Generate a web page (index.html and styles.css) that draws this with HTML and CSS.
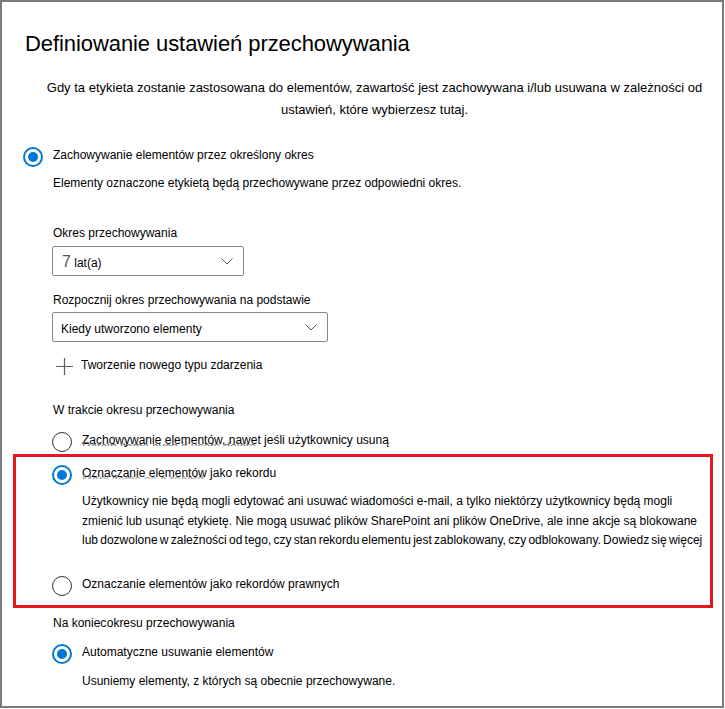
FILE: index.html
```html
<!DOCTYPE html>
<html lang="pl">
<head>
<meta charset="utf-8">
<title>Definiowanie ustawień przechowywania</title>
<link rel="stylesheet" href="styles.css">
</head>
<body>
<div class="frame">
  <h1 class="title">Definiowanie ustawień przechowywania</h1>
  <p class="intro">Gdy ta etykieta zostanie zastosowana do elementów, zawartość jest zachowywana i/lub usuwana w zależności od<br>ustawień, które wybierzesz tutaj.</p>

  <div class="radio-row top-row">
    <span class="radio checked"></span>
    <span class="label">Zachowywanie elementów przez określony okres</span>
  </div>

  <div class="sub">
    <p class="help">Elementy oznaczone etykietą będą przechowywane przez odpowiedni okres.</p>

    <div class="field-label f1">Okres przechowywania</div>
    <div class="dropdown dd1">
      <span class="value"><span class="num">7</span> lat(a)</span>
      <svg class="chev" width="12" height="7" viewBox="0 0 12 7"><polyline points="0.5,0.5 6,6 11.5,0.5" fill="none" stroke="#605e5c" stroke-width="1"/></svg>
    </div>

    <div class="field-label f2">Rozpocznij okres przechowywania na podstawie</div>
    <div class="dropdown dd2">
      <span class="value">Kiedy utworzono elementy</span>
      <svg class="chev" width="12" height="7" viewBox="0 0 12 7"><polyline points="0.5,0.5 6,6 11.5,0.5" fill="none" stroke="#605e5c" stroke-width="1"/></svg>
    </div>

    <div class="add-row">
      <svg class="plus" width="17" height="17" viewBox="0 0 17 17"><path d="M8.5 0V17M0 8.5H17" stroke="#605e5c" stroke-width="1.2" fill="none"/></svg>
      <span>Tworzenie nowego typu zdarzenia</span>
    </div>

    <div class="section-label s1">W trakcie okresu przechowywania</div>

    <div class="radio-row r-keep">
      <span class="radio"></span>
      <span class="label">Zachowywanie elementów, nawet jeśli użytkownicy usuną<span class="ghost g1">Retain items even if users delete</span></span>
    </div>

    <div class="highlight">
      <div class="radio-row">
        <span class="radio checked"></span>
        <span class="label">Oznaczanie elementów jako rekordu<span class="ghost g2">Mark items as a record</span></span>
      </div>
      <p class="record-desc">Użytkownicy nie będą mogli edytować ani usuwać wiadomości e-mail, a tylko niektórzy użytkownicy będą mogli<br>zmienić lub usunąć etykietę. Nie mogą usuwać plików SharePoint ani plików OneDrive, ale inne akcje są blokowane<br><span class="tight">lub dozwolone w zależności od tego, czy stan rekordu elementu jest zablokowany, czy odblokowany. Dowiedz się więcej</span></p>
      <div class="radio-row r-legal">
        <span class="radio"></span>
        <span class="label">Oznaczanie elementów jako rekordów prawnych</span>
      </div>
    </div>

    <div class="section-label s2">Na koniec <span class="join">okresu</span> przechowywania</div>

    <div class="radio-row r-auto">
      <span class="radio checked"></span>
      <span class="label">Automatyczne usuwanie elementów</span>
    </div>
    <p class="auto-desc">Usuniemy elementy, z których są obecnie przechowywane.</p>
  </div>
</div>
</body>
</html>
```

FILE: styles.css
```css
html, body {
  margin: 0;
  padding: 0;
  background: #ffffff;
}

body {
  font-family: "Liberation Sans", Arial, sans-serif;
  color: #000000;
  font-size: 12px;
  line-height: 20px;
}

.frame {
  width: 724px;
  height: 708px;
  box-sizing: border-box;
  border: 2px solid #7a7a7a;
  padding: 28px 0 0 23px;
  overflow: hidden;
}

.title {
  margin: 0;
  font-size: 22px;
  line-height: 28px;
  font-weight: normal;
  letter-spacing: -0.08px;
}

.intro {
  margin: 19px 0 0;
  padding-left: 2px;
  font-size: 13px;
  line-height: 22px;
  text-align: center;
}

.radio-row {
  display: flex;
  align-items: flex-start;
  gap: 10px;
  font-size: 12px;
  line-height: 20px;
}

.radio {
  flex: none;
  width: 20px;
  height: 20px;
  box-sizing: border-box;
  margin-top: 2px;
  border: 1px solid #323130;
  border-radius: 50%;
  display: flex;
  align-items: center;
  justify-content: center;
}

.radio.checked {
  border: 2px solid #0078d4;
}

.radio.checked::after {
  content: "";
  width: 10px;
  height: 10px;
  border-radius: 50%;
  background: #0078d4;
}

.label {
  position: relative;
  white-space: nowrap;
}

.ghost {
  position: absolute;
  left: 0;
  white-space: nowrap;
  color: #6e6e6e;
  clip-path: inset(0 0 55% 0);
  pointer-events: none;
}

.g1 { top: 7px; }
.g2 { top: 7px; color: #9a9a9a; }

.top-row {
  margin-top: 24px;
  margin-left: -2px;
}

.sub {
  padding-left: 28px;
}

.help {
  margin: 6px 0 0;
}

.field-label.f1 { margin-top: 30px; }
.field-label.f2 { margin-top: 14px; }

.dropdown {
  display: flex;
  justify-content: space-between;
  align-items: flex-start;
  box-sizing: border-box;
  height: 30px;
  margin-left: -1px;
  padding: 6px 10px 0 8px;
  border: 1px solid #8a8886;
  border-radius: 2px;
}

.dd1 {
  width: 192px;
  margin-top: 3px;
}

.dd2 {
  width: 276px;
  margin-top: 2px;
}

.dropdown .chev {
  align-self: center;
  margin-top: -6px;
}

.value {
  white-space: nowrap;
}

.num {
  font-size: 16px;
  color: #555555;
  line-height: 18px;
  margin-left: 1px;
}

.add-row {
  display: flex;
  align-items: flex-start;
  gap: 8px;
  margin-top: 13px;
}

.add-row .plus {
  flex: none;
  margin-left: 3px;
  margin-top: 3px;
}

.section-label.s1 { margin-top: 25px; }
.section-label.s2 { margin-top: 5px; }

.join {
  margin-left: -3px;
}

.r-keep,
.r-auto {
  margin-left: -1px;
}

.r-keep { margin-top: 10px; }

.highlight {
  margin: 2px 0 0 -40px;
  width: 700px;
  box-sizing: border-box;
  border: 3px solid #e8141f;
  padding: 6px 0 9px 36px;
}

.record-desc {
  margin: 7px 0 0 30px;
  line-height: 19.5px;
  white-space: nowrap;
}

.tight {
  word-spacing: -1.1px;
}

.r-legal {
  margin-top: 23.5px;
}

.r-auto { margin-top: 9px; }

.auto-desc {
  margin: 7px 0 0;
  padding-left: 29px;
}
```
